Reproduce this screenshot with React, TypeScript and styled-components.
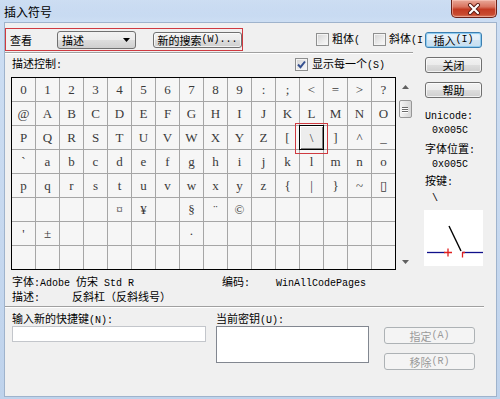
import React from "react";
import styled, { createGlobalStyle, css } from "styled-components";

const Global = createGlobalStyle`
  html, body { margin: 0; padding: 0; }
  body {
    width: 500px; height: 399px; overflow: hidden;
    font-family: "Noto Sans CJK SC", "Noto Sans", sans-serif;
    font-size: 11px; color: #000;
  }
  * { box-sizing: border-box; }
`;

const Lat = styled.span`
  font-family: "Liberation Mono", "DejaVu Sans Mono", monospace;
  font-size: 10px;
`;

function Mixed({ text }: { text: string }) {
  const parts = text.split(/([\x20-\x7e]+)/).filter((p) => p.length > 0);
  return (
    <>
      {parts.map((p, i) =>
        /^[\x20-\x7e]+$/.test(p) ? <Lat key={i}>{p}</Lat> : <React.Fragment key={i}>{p}</React.Fragment>
      )}
    </>
  );
}

const Window = styled.div`
  width: 500px; height: 399px;
  display: flex; flex-direction: column;
  background: linear-gradient(to bottom, #bcd2ee 0px, #cddef3 22px, #c6d8ef 60%, #bfd3ec 100%);
`;

const TitleBar = styled.div`
  height: 23px; flex: none;
  display: flex; justify-content: space-between; align-items: flex-start;
  padding: 0 3px 0 4px;
  background: linear-gradient(to bottom, rgba(255,255,255,0.25), rgba(255,255,255,0) 70%);
`;

const Title = styled.div`
  font-size: 12px; line-height: 23px; color: #000;
`;

const CloseBtn = styled.div`
  width: 46px; height: 18px;
  border: 1px solid #6b2219; border-top: none;
  border-radius: 0 0 5px 5px;
  background: linear-gradient(to bottom, #e9a899 0%, #d9735f 40%, #c33a22 55%, #c84a30 85%, #d87a5e 100%);
  box-shadow: inset 0 0 0 1px rgba(255,210,200,0.5);
  display: flex; align-items: center; justify-content: center;
`;

const Client = styled.div`
  flex: 1;
  margin: 0 4px 3px 5px;
  background: #f0f0f0;
  box-shadow: 0 0 0 1px #9fb3cc;
  padding-top: 5px;
  display: flex; flex-direction: column;
`;

const TopRow = styled.div`
  display: flex; align-items: center; height: 23px;
`;

const RedBox = styled.div`
  width: 238px; height: 23px;
  border: 1px solid #cf3a40;
  display: flex; align-items: center;
  padding-left: 4px;
`;

const Label = styled.span<{ $w?: number }>`
  line-height: 14px; white-space: nowrap;
  ${(p) => p.$w !== undefined && css`width: ${p.$w}px; flex: none;`}
`;

const SelectBox = styled.div`
  margin-left: 25px; width: 79px; height: 18px;
  border: 1px solid #707070; border-radius: 3px;
  background: linear-gradient(to bottom, #f2f2f2 0%, #ebebeb 50%, #dddddd 51%, #cfcfcf 100%);
  display: flex; align-items: center; justify-content: space-between;
  padding: 0 5px 0 4px;
  line-height: 14px;
`;

const Button = styled.div<{ $w: number; $h?: number; $ml?: number; $mt?: number; $default?: boolean; $disabled?: boolean }>`
  width: ${(p) => p.$w}px; height: ${(p) => p.$h ?? 16}px; flex: none;
  margin-left: ${(p) => p.$ml ?? 0}px;
  margin-top: ${(p) => p.$mt ?? 0}px;
  border: 1px solid #707070; border-radius: 3px;
  background: linear-gradient(to bottom, #f2f2f2 0%, #ebebeb 50%, #dddddd 51%, #cfcfcf 100%);
  box-shadow: inset 0 0 0 1px rgba(255,255,255,0.7);
  display: flex; align-items: center; justify-content: center;
  line-height: 12px; white-space: nowrap;
  ${(p) => p.$default && css`
    border-color: #3c7fb1;
    box-shadow: inset 0 0 0 1px #8fcbef, inset 0 0 2px 1px #c4e5f7;
    background: linear-gradient(to bottom, #eaf4fb 0%, #e2eef8 50%, #d1e4f3 51%, #c6ddef 100%);
  `}
  ${(p) => p.$disabled && css`
    border-color: #adb2b5; background: #f4f4f4; box-shadow: none; color: #9a9a9a;
  `}
`;

const CheckItem = styled.div<{ $w?: number; $ml?: number; $gap?: number }>`
  display: flex; align-items: center; gap: ${(p) => p.$gap ?? 3}px;
  white-space: nowrap;
  margin-left: ${(p) => p.$ml ?? 0}px;
  ${(p) => p.$w !== undefined && css`width: ${p.$w}px; flex: none;`}
  line-height: 14px;
`;

const CheckBoxSq = styled.div`
  width: 13px; height: 13px; flex: none;
  border: 1px solid #8e8f8f;
  background: linear-gradient(135deg, #d3d3d3 0%, #ececec 60%, #fafafa 100%);
  box-shadow: inset 0 0 0 1px #f4f4f4;
  display: flex; align-items: center; justify-content: center;
`;

function Check({ checked }: { checked?: boolean }) {
  return (
    <CheckBoxSq>
      {checked && (
        <svg width="11" height="11" viewBox="0 0 11 11">
          <path d="M2 5.5 L4.5 8.2 L9 2.5" fill="none" stroke="#35508f" strokeWidth="2" />
        </svg>
      )}
    </CheckBoxSq>
  );
}

const Separator = styled.div<{ $w: number; $mt: number }>`
  width: ${(p) => p.$w}px; height: 2px; flex: none;
  margin-top: ${(p) => p.$mt}px;
  border-top: 1px solid #a0a0a0; border-bottom: 1px solid #ffffff;
`;

const BodyRow = styled.div`
  display: flex; align-items: flex-start; margin-top: 3px;
`;

const LeftCol = styled.div`
  margin-left: 6px; width: 401px; display: flex; flex-direction: column;
`;

const HeaderRow = styled.div`
  height: 14px; display: flex; align-items: center; justify-content: space-between;
  padding: 0 27px 0 1px;
`;

const GridArea = styled.div`
  margin-top: 6px; display: flex; align-items: flex-start;
`;

const Grid = styled.div`
  display: grid;
  grid-template-columns: repeat(16, 23px);
  grid-auto-rows: 23px;
  gap: 1px;
  background: #a6a6a6;
  border: 1px solid #000;
`;

const Cell = styled.div<{ $sel?: boolean }>`
  position: relative;
  background: #f6f6f6;
  display: flex; align-items: center; justify-content: center;
  font-family: "Liberation Serif", "DejaVu Serif", serif;
  font-size: 13px; color: #3a3a3a;
  line-height: 1;
  ${(p) => p.$sel && css`
    z-index: 1;
    background: #ededed;
    box-shadow: 0 0 0 1px #000, inset 1px 1px 0 #ffffff, inset -1px -1px 0 #808080;
  `}
`;

const Mark = styled.div`
  position: absolute; left: -5px; top: -3px; right: -5px; bottom: -5px;
  border: 1px solid #cf3a40; pointer-events: none;
`;

const ScrollBar = styled.div`
  margin-left: 2px; width: 14px; height: 193px;
  display: flex; flex-direction: column; align-items: center;
`;

const ArrowBox = styled.div<{ $h: number }>`
  height: ${(p) => p.$h}px; width: 14px; flex: none;
  display: flex; align-items: center; justify-content: center;
`;

const Thumb = styled.div`
  margin-top: 3px; width: 13px; height: 18px; flex: none;
  border: 1px solid #979797; border-radius: 2px;
  background: linear-gradient(to right, #f4f4f4, #e2e2e2 60%, #d6d6d6);
  display: flex; flex-direction: column; align-items: center; justify-content: center; gap: 1px;
`;

const Grip = styled.div`
  width: 6px; height: 1px; background: #6a6a6a; box-shadow: 0 1px 0 #fff;
`;

const Spacer = styled.div` flex: 1; `;

const RightCol = styled.div`
  margin-left: 13px; width: 58px; display: flex; flex-direction: column;
`;

const InfoLine = styled.div<{ $mt?: number; $indent?: boolean }>`
  line-height: 14px; height: 14px; white-space: nowrap;
  margin-top: ${(p) => p.$mt ?? 0}px;
  padding-left: ${(p) => (p.$indent ? 7 : 0)}px;
`;

const KeyBox = styled.div`
  margin-top: 7px; margin-left: -1px; width: 59px; height: 56px; background: #fff;
`;

const InfoBlock = styled.div`
  margin-top: 4px; padding-left: 7px; display: flex; flex-direction: column;
`;

const InfoRow = styled.div`
  display: flex; height: 15px; line-height: 15px; white-space: nowrap;
`;

const BottomRow = styled.div`
  margin-top: 4px; display: flex; align-items: flex-start;
`;

const FieldCol = styled.div<{ $ml: number; $w: number }>`
  margin-left: ${(p) => p.$ml}px; width: ${(p) => p.$w}px;
  display: flex; flex-direction: column;
`;

const FieldLabel = styled.div` line-height: 12px; height: 12px; white-space: nowrap; `;

const TextInput = styled.div`
  margin-top: 2px; height: 16px; background: #fff;
  border: 1px solid #c3c6cb;
`;

const TextArea = styled.div`
  margin-top: 2px; height: 37px; background: #fff;
  border: 1px solid #828790;
`;

const ButtonCol = styled.div`
  margin-left: 15px; padding-top: 15px; display: flex; flex-direction: column; gap: 9px;
`;

const rows: string[][] = [
  "0123456789:;<=>?".split(""),
  "@ABCDEFGHIJKLMNO".split(""),
  "PQRSTUVWXYZ[\\]^_".split(""),
  "`abcdefghijklmno".split(""),
  [..."pqrstuvwxyz{|}~".split(""), "\u25AF"],
  ["", "", "", "", "\u00A4", "\u00A5", "", "\u00A7", "\u00A8", "\u00A9", "", "", "", "", "", ""],
  ["'", "\u00B1", "", "", "", "", "", "\u00B7", "", "", "", "", "", "", "", ""],
  Array(16).fill(""),
];

export default function App() {
  return (
    <>
      <Global />
      <Window>
        <TitleBar>
          <Title>插入符号</Title>
          <CloseBtn>
            <svg width="14" height="12" viewBox="0 0 14 12">
              <path d="M3 2 L11 10 M11 2 L3 10" stroke="#5a1a12" strokeWidth="4" strokeLinecap="round" />
              <path d="M3 2 L11 10 M11 2 L3 10" stroke="#ffffff" strokeWidth="2.2" strokeLinecap="round" />
            </svg>
          </CloseBtn>
        </TitleBar>
        <Client>
          <TopRow>
            <RedBox>
              <Label $w={22}>查看</Label>
              <SelectBox>
                <span>描述</span>
                <svg width="7" height="4" viewBox="0 0 7 4">
                  <path d="M0 0 H7 L3.5 4 Z" fill="#000" />
                </svg>
              </SelectBox>
              <Button $w={89} $ml={17}>
                <Mixed text="新的搜索(W)..." />
              </Button>
            </RedBox>
            <CheckItem $w={57} $ml={73}>
              <Check />
              <Label><Mixed text="粗体(" /></Label>
            </CheckItem>
            <CheckItem $w={52}>
              <Check />
              <Label><Mixed text="斜体(I" /></Label>
            </CheckItem>
            <Button $w={57} $default>
              <Mixed text="插入(I)" />
            </Button>
          </TopRow>
          <Separator $w={408} $mt={1} />
          <BodyRow>
            <LeftCol>
              <HeaderRow>
                <Label><Mixed text="描述控制:" /></Label>
                <CheckItem $gap={4}>
                  <Check checked />
                  <span><Mixed text="显示每一个(S)" /></span>
                </CheckItem>
              </HeaderRow>
              <GridArea>
                <Grid>
                  {rows.map((r, ri) =>
                    r.map((ch, ci) => {
                      const sel = ri === 2 && ci === 12;
                      return (
                        <Cell key={`${ri}-${ci}`} $sel={sel}>
                          {ch}
                          {sel && <Mark />}
                        </Cell>
                      );
                    })
                  )}
                </Grid>
                <ScrollBar>
                  <ArrowBox $h={20}>
                    <svg width="7" height="4" viewBox="0 0 7 4"><path d="M0 4 H7 L3.5 0 Z" fill="#606060" /></svg>
                  </ArrowBox>
                  <Thumb>
                    <Grip />
                    <Grip />
                    <Grip />
                  </Thumb>
                  <Spacer />
                  <ArrowBox $h={17}>
                    <svg width="7" height="4" viewBox="0 0 7 4"><path d="M0 0 H7 L3.5 4 Z" fill="#606060" /></svg>
                  </ArrowBox>
                </ScrollBar>
              </GridArea>
            </LeftCol>
            <RightCol>
              <Button $w={57}>关闭</Button>
              <Button $w={57} $mt={9}>帮助</Button>
              <InfoLine $mt={9}><Mixed text="Unicode:" /></InfoLine>
              <InfoLine $indent><Mixed text="0x005C" /></InfoLine>
              <InfoLine $mt={6}><Mixed text="字体位置:" /></InfoLine>
              <InfoLine $indent><Mixed text="0x005C" /></InfoLine>
              <InfoLine $mt={4}><Mixed text="按键:" /></InfoLine>
              <InfoLine $mt={2} $indent><Mixed text="\" /></InfoLine>
              <KeyBox>
                <svg width="59" height="56" viewBox="0 0 59 56">
                  <path d="M3 42.5 H21" stroke="#10108a" strokeWidth="1.3" />
                  <path d="M38 42.5 H59" stroke="#10108a" strokeWidth="1.3" />
                  <path d="M25 16 L37 41" stroke="#000" strokeWidth="1.4" />
                  <path d="M20 42.5 H28 M24 38.5 V46.5" stroke="#e02020" strokeWidth="1.3" />
                  <path d="M38.5 42.5 V47.5 M38.5 42.5 H41" stroke="#e02020" strokeWidth="1.3" />
                </svg>
              </KeyBox>
            </RightCol>
          </BodyRow>
          <InfoBlock>
            <InfoRow>
              <Label $w={210}><Mixed text="字体:Adobe 仿宋 Std R" /></Label>
              <Label $w={54}><Mixed text="编码:" /></Label>
              <Label><Mixed text="WinAllCodePages" /></Label>
            </InfoRow>
            <InfoRow>
              <Label $w={60}><Mixed text="描述:" /></Label>
              <Label>反斜杠（反斜线号）</Label>
            </InfoRow>
          </InfoBlock>
          <Separator $w={479} $mt={2} />
          <BottomRow>
            <FieldCol $ml={7} $w={194}>
              <FieldLabel><Mixed text="输入新的快捷键(N):" /></FieldLabel>
              <TextInput />
            </FieldCol>
            <FieldCol $ml={10} $w={153}>
              <FieldLabel><Mixed text="当前密钥(U):" /></FieldLabel>
              <TextArea />
            </FieldCol>
            <ButtonCol>
              <Button $w={91} $h={17} $disabled><Mixed text="指定(A)" /></Button>
              <Button $w={91} $h={17} $disabled><Mixed text="移除(R)" /></Button>
            </ButtonCol>
          </BottomRow>
        </Client>
      </Window>
    </>
  );
}
